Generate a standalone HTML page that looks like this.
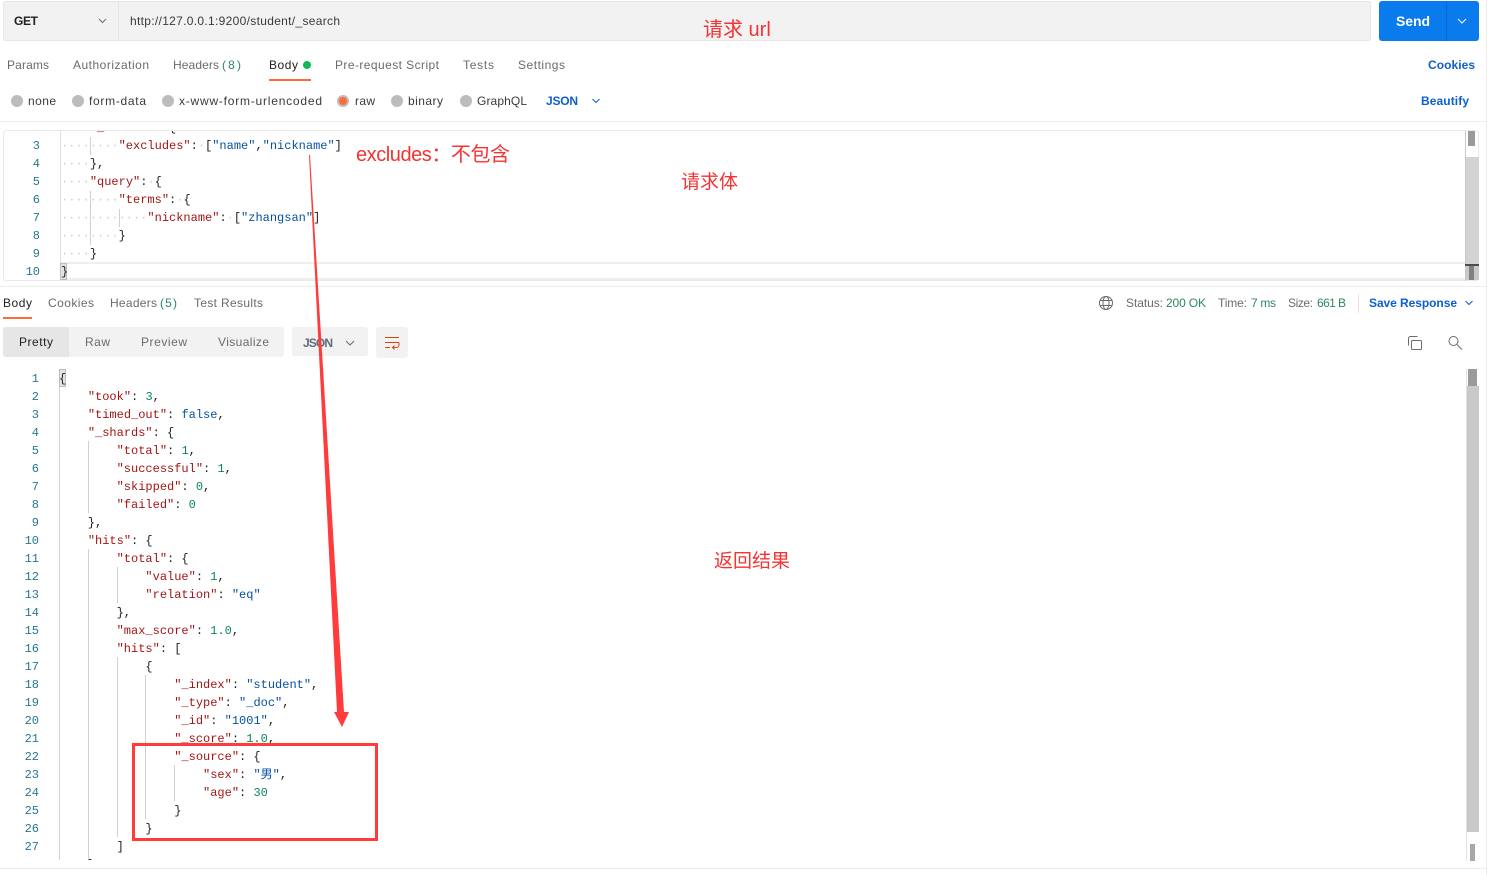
<!DOCTYPE html>
<html><head><meta charset="utf-8">
<style>
html,body{margin:0;padding:0;background:#fff;width:1492px;height:875px;overflow:hidden}
body{position:relative;font-family:"Liberation Sans","Noto Sans CJK SC",sans-serif}
svg{position:absolute;left:0;top:0}
svg text{font-family:"Liberation Sans","Noto Sans CJK SC",sans-serif;font-size:12px;fill:#6b6b6b}
.clip{position:absolute;overflow:hidden}
pre{position:absolute;margin:0;font:12px/18px "Liberation Mono","Noto Sans CJK SC",monospace;color:#212121;white-space:pre}
.n{color:#237893;text-align:right}
.k{color:#a31515}.s{color:#0451a5}.v{color:#098658}.d{color:#cfcfcf}
.g{position:absolute;width:1px;background:#d0d0d0}
</style></head><body>
<svg width="1492" height="875">
<rect x="3.5" y="1.5" width="1367" height="39" rx="2" fill="#f2f2f2" stroke="#e6e6e6"/>
<rect x="118" y="2" width="1" height="38" fill="#e6e6e6"/>
<text x="14" y="25" textLength="24" style="font-weight:bold;fill:#212121">GET</text>
<path d="M99 19l3.500 3.500l3.500-3.500" fill="none" stroke="#6b6b6b"/>
<text x="130" y="25" textLength="210" style="fill:#3a3a3a">http://127.0.0.1:9200/student/_search</text>
<rect x="1379" y="1" width="100" height="40" rx="3" fill="#097bed"/>
<rect x="1446" y="1" width="1" height="40" fill="#0265d2"/>
<text x="1396" y="26" textLength="34" style="font-weight:bold;font-size:14px;fill:#fff">Send</text>
<path d="M1458 19l4 4l4-4" fill="none" stroke="#fff"/>

<text x="7" y="69" textLength="42">Params</text>
<text x="73" y="69" textLength="76">Authorization</text>
<text x="173" y="69" textLength="46">Headers</text>
<text x="222" y="69" textLength="19" style="fill:#2b8a5e">(8)</text>
<text x="269" y="69" textLength="29" style="fill:#212121">Body</text>
<circle cx="307" cy="65" r="4" fill="#0cbb52"/>
<rect x="269" y="79" width="42" height="2" fill="#ff6c37"/>
<text x="335" y="69" textLength="104">Pre-request Script</text>
<text x="463" y="69" textLength="31">Tests</text>
<text x="518" y="69" textLength="47">Settings</text>
<text x="1428" y="69" textLength="47" style="fill:#0d5fd0;font-weight:bold">Cookies</text>

<g fill="#bcbcbc"><circle cx="17" cy="101" r="6"/><circle cx="78" cy="101" r="6"/><circle cx="168" cy="101" r="6"/><circle cx="343" cy="101" r="6"/><circle cx="397" cy="101" r="6"/><circle cx="466" cy="101" r="6"/></g>
<circle cx="343" cy="101" r="4" fill="#ff6c37"/>
<g style="fill:#3a3a3a">
<text x="28" y="105" textLength="28" style="fill:#3a3a3a">none</text>
<text x="89" y="105" textLength="57" style="fill:#3a3a3a">form-data</text>
<text x="179" y="105" textLength="143" style="fill:#3a3a3a">x-www-form-urlencoded</text>
<text x="355" y="105" textLength="20" style="fill:#3a3a3a">raw</text>
<text x="408" y="105" textLength="35" style="fill:#3a3a3a">binary</text>
<text x="477" y="105" textLength="50" style="fill:#3a3a3a">GraphQL</text>
</g>
<text x="546" y="105" textLength="32" style="fill:#0d5fd0;font-weight:bold">JSON</text>
<path d="M592.500 99l3.500 3.500l3.500-3.500" fill="none" stroke="#0d5fd0"/>
<text x="1421" y="105" textLength="48" style="fill:#0d5fd0;font-weight:bold">Beautify</text>
<rect x="0" y="121" width="1487" height="1" fill="#ededed"/>

<rect x="3.500" y="130.500" width="1475" height="150" rx="3" fill="#fff" stroke="#e9e9e9"/>
<rect x="60" y="131" width="1" height="149" fill="#e0e0e0"/>
<rect x="61" y="262" width="1404" height="2" fill="#efefef"/>
<rect x="61" y="278" width="1404" height="2" fill="#efefef"/>
<rect x="1465" y="157" width="14" height="108" fill="#d3d3d3"/>
<rect x="1465" y="131" width="1" height="150" fill="#c8c8c8"/>
<rect x="1468" y="131" width="7" height="15" fill="#9a9a9a"/>
<rect x="1465" y="265" width="14" height="15" fill="#c8c8c8"/>
<rect x="1465" y="264" width="14" height="2" fill="#4d4d4d"/>
<rect x="1469" y="266" width="5" height="14" fill="#808080"/>
<rect x="0" y="286" width="1487" height="1" fill="#ededed"/>

<text x="3" y="307" textLength="29" style="fill:#212121">Body</text>
<rect x="3" y="317" width="29" height="2" fill="#ff6c37"/>
<text x="48" y="307" textLength="46">Cookies</text>
<text x="110" y="307" textLength="47">Headers</text>
<text x="160" y="307" textLength="17" style="fill:#2b8a5e">(5)</text>
<text x="194" y="307" textLength="69">Test Results</text>

<g fill="none" stroke="#6b6b6b"><circle cx="1106" cy="303" r="6.500"/><ellipse cx="1106" cy="303" rx="3" ry="6.500"/><path d="M1100 300.500h12M1100 305.500h12"/></g>
<text x="1126" y="307" textLength="37">Status:</text>
<text x="1166" y="307" textLength="40" style="fill:#2b8a5e">200 OK</text>
<text x="1218" y="307" textLength="29">Time:</text>
<text x="1251" y="307" textLength="25" style="fill:#2b8a5e">7 ms</text>
<text x="1288" y="307" textLength="25">Size:</text>
<text x="1317" y="307" textLength="29" style="fill:#2b8a5e">661 B</text>
<rect x="1358" y="294" width="1" height="19" fill="#e6e6e6"/>
<text x="1369" y="307" textLength="88" style="fill:#0d5fd0;font-weight:bold">Save Response</text>
<path d="M1465.500 301l3.500 3.500l3.500-3.500" fill="none" stroke="#0d5fd0"/>

<rect x="3" y="327" width="281" height="30" rx="3" fill="#f2f2f2"/>
<path d="M6 327h63v30h-63a3 3 0 0 1-3-3v-24a3 3 0 0 1 3-3z" fill="#e6e6e6"/>
<text x="19" y="346" textLength="34" style="fill:#212121">Pretty</text>
<text x="85" y="346" textLength="25">Raw</text>
<text x="141" y="346" textLength="46">Preview</text>
<text x="218" y="346" textLength="51">Visualize</text>
<rect x="292" y="327" width="76" height="29" rx="3" fill="#f2f2f2"/>
<text x="303" y="347" textLength="30" style="font-weight:bold;font-size:12px;fill:#5f6b7a">JSON</text>
<path d="M346 341l4 4l4-4" fill="none" stroke="#6b6b6b"/>
<rect x="376" y="327" width="32" height="31" rx="3" fill="#f2f2f2"/>
<g fill="none" stroke="#d8430f"><path d="M385 337.500h14M385 342.500h14M385 347.500h5"/><path d="M399 342.500v2.500a2.500 2.500 0 0 1-2.500 2.500h-3.500M394.500 345.500l-2 2l2 2"/></g>

<g fill="none" stroke="#6b6b6b"><rect x="1411.500" y="340.500" width="10" height="9" rx="1"/><path d="M1408.500 345.500v-7a2 2 0 0 1 2-2h7"/><circle cx="1453.500" cy="341" r="4.500"/><path d="M1457 344.500l5 5"/></g>

<rect x="1466" y="386" width="13" height="446" fill="#c9c9c9"/>
<rect x="1466" y="369" width="1" height="492" fill="#e0e0e0"/>
<rect x="1468" y="369" width="9" height="17" fill="#9a9a9a"/>
<rect x="1470" y="844" width="5" height="17" fill="#a8a8a8"/>
<rect x="1486" y="0" width="1" height="875" fill="#ededed"/>
<rect x="0" y="868" width="1487" height="1" fill="#ededed"/>
</svg>

<div class="clip" style="left:4px;top:131px;width:1460px;height:149px">
<div class="g" style="left:86px;top:6px;height:18px"></div>
<div class="g" style="left:86px;top:60px;height:54px"></div>
<div class="g" style="left:115px;top:78px;height:18px"></div>
<div style="position:absolute;left:56px;top:132px;width:7px;height:17px;background:#e3e3e3;border:1px solid #bdbdbd;box-sizing:border-box"></div>
<pre class="n" style="left:0;top:6px;width:36px">3
4
5
6
7
8
9
10</pre>
<pre style="left:57px;top:-12px"><span class="d">····</span><span class="k">"_source"</span>:<span class="d">·</span>{
<span class="d">········</span><span class="k">"excludes"</span>:<span class="d">·</span>[<span class="s">"name"</span>,<span class="s">"nickname"</span>]
<span class="d">····</span>},
<span class="d">····</span><span class="k">"query"</span>:<span class="d">·</span>{
<span class="d">········</span><span class="k">"terms"</span>:<span class="d">·</span>{
<span class="d">············</span><span class="k">"nickname"</span>:<span class="d">·</span>[<span class="s">"zhangsan"</span>]
<span class="d">········</span>}
<span class="d">····</span>}
}</pre>
</div>

<div class="clip" style="left:0;top:369px;width:1460px;height:491px">
<div class="g" style="left:59px;top:0;height:491px"></div>
<div class="g" style="left:88px;top:72px;height:72px"></div>
<div class="g" style="left:88px;top:180px;height:311px"></div>
<div class="g" style="left:117px;top:198px;height:36px"></div>
<div class="g" style="left:117px;top:288px;height:180px"></div>
<div class="g" style="left:145px;top:306px;height:144px"></div>
<div class="g" style="left:174px;top:396px;height:36px"></div>
<div style="position:absolute;left:59px;top:0;width:7px;height:18px;background:#e3e3e3;border:1px solid #bdbdbd;box-sizing:border-box"></div>
<pre class="n" style="left:0;top:1px;width:39px">1
2
3
4
5
6
7
8
9
10
11
12
13
14
15
16
17
18
19
20
21
22
23
24
25
26
27
28</pre>
<pre style="left:59px;top:1px">{
    <span class="k">"took"</span>: <span class="v">3</span>,
    <span class="k">"timed_out"</span>: <span class="s">false</span>,
    <span class="k">"_shards"</span>: {
        <span class="k">"total"</span>: <span class="v">1</span>,
        <span class="k">"successful"</span>: <span class="v">1</span>,
        <span class="k">"skipped"</span>: <span class="v">0</span>,
        <span class="k">"failed"</span>: <span class="v">0</span>
    },
    <span class="k">"hits"</span>: {
        <span class="k">"total"</span>: {
            <span class="k">"value"</span>: <span class="v">1</span>,
            <span class="k">"relation"</span>: <span class="s">"eq"</span>
        },
        <span class="k">"max_score"</span>: <span class="v">1.0</span>,
        <span class="k">"hits"</span>: [
            {
                <span class="k">"_index"</span>: <span class="s">"student"</span>,
                <span class="k">"_type"</span>: <span class="s">"_doc"</span>,
                <span class="k">"_id"</span>: <span class="s">"1001"</span>,
                <span class="k">"_score"</span>: <span class="v">1.0</span>,
                <span class="k">"_source"</span>: {
                    <span class="k">"sex"</span>: <span class="s">"男"</span>,
                    <span class="k">"age"</span>: <span class="v">30</span>
                }
            }
        ]
    }</pre>
</div>

<svg width="1492" height="875">
<polygon points="309,155 310,155 344,712 349,712 342,727 334,712 337,712" fill="#ff3b3b"/>
<rect x="133.500" y="744.500" width="243" height="95" fill="none" stroke="#ff3b3b" stroke-width="3"/>
<text x="703" y="36" style="font-size:20px;fill:#f53333">请求 url</text>
<text x="356" y="161" textLength="154" style="font-size:20px;fill:#f53333">excludes：不包含</text>
<text x="681" y="188" style="font-size:19px;fill:#f53333">请求体</text>
<text x="714" y="567" style="font-size:19px;fill:#f53333">返回结果</text>
</svg>
</body></html>
